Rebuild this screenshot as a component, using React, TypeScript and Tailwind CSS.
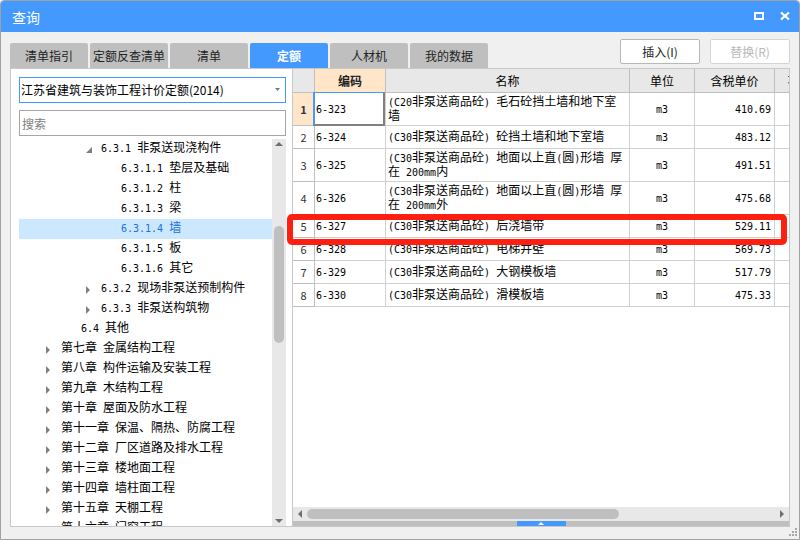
import { useState } from 'react'

interface TreeNode {
  text: string
  level: number
  state?: 'open' | 'closed'
}

interface QuotaRow {
  code: string
  name: string
  unit: string
  price: string
}

const TABS = ['清单指引', '定额反查清单', '清单', '定额', '人材机', '我的数据']

const TREE: TreeNode[] = [
  { text: '6.3.1 非泵送现浇构件', level: 2, state: 'open' },
  { text: '6.3.1.1 垫层及基础', level: 3 },
  { text: '6.3.1.2 柱', level: 3 },
  { text: '6.3.1.3 梁', level: 3 },
  { text: '6.3.1.4 墙', level: 3 },
  { text: '6.3.1.5 板', level: 3 },
  { text: '6.3.1.6 其它', level: 3 },
  { text: '6.3.2 现场非泵送预制构件', level: 2, state: 'closed' },
  { text: '6.3.3 非泵送构筑物', level: 2, state: 'closed' },
  { text: '6.4 其他', level: 1 },
  { text: '第七章 金属结构工程', level: 0, state: 'closed' },
  { text: '第八章 构件运输及安装工程', level: 0, state: 'closed' },
  { text: '第九章 木结构工程', level: 0, state: 'closed' },
  { text: '第十章 屋面及防水工程', level: 0, state: 'closed' },
  { text: '第十一章 保温、隔热、防腐工程', level: 0, state: 'closed' },
  { text: '第十二章 厂区道路及排水工程', level: 0, state: 'closed' },
  { text: '第十三章 楼地面工程', level: 0, state: 'closed' },
  { text: '第十四章 墙柱面工程', level: 0, state: 'closed' },
  { text: '第十五章 天棚工程', level: 0, state: 'closed' },
  { text: '第十六章 门窗工程', level: 0, state: 'closed' },
]

const INDENT = ['pl-[26px]', 'pl-[46px]', 'pl-[66px]', 'pl-[86px]']

const ROWS: QuotaRow[] = [
  { code: '6-323', name: '(C20非泵送商品砼) 毛石砼挡土墙和地下室墙', unit: 'm3', price: '410.69' },
  { code: '6-324', name: '(C30非泵送商品砼) 砼挡土墙和地下室墙', unit: 'm3', price: '483.12' },
  { code: '6-325', name: '(C30非泵送商品砼) 地面以上直(圆)形墙 厚在 200mm内', unit: 'm3', price: '491.51' },
  { code: '6-326', name: '(C30非泵送商品砼) 地面以上直(圆)形墙 厚在 200mm外', unit: 'm3', price: '475.68' },
  { code: '6-327', name: '(C30非泵送商品砼) 后浇墙带', unit: 'm3', price: '529.11' },
  { code: '6-328', name: '(C30非泵送商品砼) 电梯井壁', unit: 'm3', price: '569.73' },
  { code: '6-329', name: '(C30非泵送商品砼) 大钢模板墙', unit: 'm3', price: '517.79' },
  { code: '6-330', name: '(C30非泵送商品砼) 滑模板墙', unit: 'm3', price: '475.33' },
]

// Latin runs are set half as wide as a Chinese character
function Mixed({ text }: { text: string }) {
  return (
    <>
      {text.split(/([\x20-\x7e]+)/).map((part, i) =>
        i % 2 === 1 ? (
          <span key={i} className="font-['DejaVu_Sans_Mono',monospace] text-[10px] leading-none">
            {part}
          </span>
        ) : (
          part
        ),
      )}
    </>
  )
}

function TitleBar() {
  return (
    <header className="flex h-[31px] shrink-0 items-center bg-[#4499ff] pr-[9px] pl-[11px] text-white">
      <h1 className="flex-1 text-sm">查询</h1>
      <button type="button" aria-label="最大化" className="mr-[15px]">
        <svg width="11" height="9" viewBox="0 0 11 9" className="block" shapeRendering="crispEdges">
          <path d="M0 0H10V8H0ZM2 2V6H8V2Z" fill="currentColor" fillRule="evenodd" />
        </svg>
      </button>
      <button type="button" aria-label="关闭">
        <svg width="10" height="9" viewBox="0 0 10 9" className="block">
          <path d="M1 0.5L9 7.5M9 0.5L1 7.5" stroke="currentColor" strokeWidth="2.2" />
        </svg>
      </button>
    </header>
  )
}

function CategoryPane() {
  const [current, setCurrent] = useState('6.3.1.4 墙')

  return (
    <aside className="flex w-[282px] shrink-0 flex-col border-r border-[#c8c8c8] bg-white pt-2 pr-[6px] pl-2">
      <div className="relative shrink-0">
        <select
          aria-label="定额库"
          className="block h-[26px] w-full appearance-none border border-[#4499ff] bg-white pl-px text-xs text-black outline-none"
        >
          <option>江苏省建筑与装饰工程计价定额(2014)</option>
        </select>
        <svg width="5" height="3" viewBox="0 0 5 3" className="pointer-events-none absolute top-[11px] right-[6px]">
          <path d="M0 0H5L2.5 3Z" fill="#777" />
        </svg>
      </div>
      <input
        type="text"
        aria-label="搜索"
        placeholder="搜索"
        className="mt-[7px] block h-[26px] w-full shrink-0 border border-[#a6a6a6] bg-white pl-[2px] text-xs outline-none placeholder:text-[#808080]"
      />

      <div className="mt-[3px] flex min-h-0 flex-1">
        <ul role="tree" className="min-w-0 flex-1 overflow-hidden">
          {TREE.map((node) => (
            <li
              key={node.text}
              role="treeitem"
              aria-selected={node.text === current}
              onClick={() => setCurrent(node.text)}
              className={`flex h-5 cursor-default whitespace-nowrap ${INDENT[node.level]} ${
                node.text === current ? 'bg-[#cce8ff] text-[#1a6fe0]' : 'text-black'
              }`}
            >
              <span className="w-4 shrink-0 pt-[7px] pl-px">
                {node.state === 'open' && (
                  <svg width="6" height="7" viewBox="0 0 6 7" className="block">
                    <path d="M6 1V7H0Z" fill="#808080" />
                  </svg>
                )}
                {node.state === 'closed' && (
                  <svg width="4" height="8" viewBox="0 0 4 8" className="block">
                    <path d="M0 0L4 4L0 8Z" fill="#808080" />
                  </svg>
                )}
              </span>
              <span className="leading-4">
                <Mixed text={node.text} />
              </span>
            </li>
          ))}
        </ul>
        <div className="flex w-[14px] shrink-0 flex-col items-center bg-[#e8e8e8] py-[3px]">
          <svg width="8" height="4" viewBox="0 0 8 4" className="block shrink-0">
            <path d="M4 0L8 4H0Z" fill="#6e6e78" />
          </svg>
          <div className="flex w-full flex-1 flex-col items-center">
            <div className="flex-80" />
            <div className="w-[10px] flex-117 rounded-full bg-[#bfbfbf]" />
            <div className="flex-176" />
          </div>
          <svg width="8" height="4" viewBox="0 0 8 4" className="block shrink-0">
            <path d="M0 0H8L4 4Z" fill="#6e6e78" />
          </svg>
        </div>
      </div>
    </aside>
  )
}

const TH = 'h-6 border-r border-b border-[#bfbfbf] p-0 font-normal'
const TD = 'border-r border-b border-[#d0d0d0] pt-0 pb-[3px]'

function QuotaTable() {
  return (
    <table className="w-[calc(100%+72px)] table-fixed border-separate border-spacing-0 leading-[14px] text-black">
      <colgroup>
        <col className="w-[22px]" />
        <col className="w-[71px]" />
        <col />
        <col className="w-[65px]" />
        <col className="w-[80px]" />
        <col className="w-[86px]" />
      </colgroup>
      <thead>
        <tr className="bg-[#e8e8e8]">
          <th className={TH} />
          <th className="h-6 border-r border-b border-[#bfbfbf] bg-[#ffe6c8] p-0 font-bold text-[#222]">编码</th>
          <th className={TH}>名称</th>
          <th className={TH}>单位</th>
          <th className={TH}>含税单价</th>
          <th className={TH}>不含税单价</th>
        </tr>
      </thead>
      <tbody>
        {ROWS.map((row, i) => (
          <tr key={row.code} className={row.name.length > 22 || i === 0 ? 'h-[33px]' : 'h-[23px]'}>
            <th
              scope="row"
              className={`border-r border-b border-[#bfbfbf] p-0 text-[11px] text-[#333] ${
                i === 0 ? 'bg-[#ffe6c8] font-bold' : 'font-normal'
              }`}
            >
              {i + 1}
            </th>
            <td className={`${TD} relative pl-px`}>
              <Mixed text={row.code} />
              {i === 0 && (
                <span className="absolute -top-px right-0 -bottom-px -left-0.5 border-t border-r-2 border-b-2 border-l-2 border-t-[#4499ff] border-r-[#808080] border-b-[#808080] border-l-[#4499ff]" />
              )}
            </td>
            <td className={`${TD} pr-1 pl-[2px]`}>
              <Mixed text={row.name} />
            </td>
            <td className={`${TD} text-center`}>
              <Mixed text={row.unit} />
            </td>
            <td className={`${TD} pr-[3px] text-right`}>
              <Mixed text={row.price} />
            </td>
            <td className={TD} />
          </tr>
        ))}
      </tbody>
    </table>
  )
}

function QuotaPane() {
  return (
    <main className="relative flex min-w-0 flex-1 flex-col bg-white">
      <div className="min-h-0 flex-1 overflow-hidden">
        <QuotaTable />
      </div>

      <div className="flex h-[14px] shrink-0 items-center bg-[#e8e8e8] px-[5px]">
        <svg width="4" height="8" viewBox="0 0 4 8" className="block shrink-0">
          <path d="M4 0V8L0 4Z" fill="#6e6e78" />
        </svg>
        <div className="flex-1 px-[5px]">
          <div className="h-[10px] w-2/3 rounded-full bg-[#bfbfbf]" />
        </div>
        <svg width="4" height="8" viewBox="0 0 4 8" className="block shrink-0">
          <path d="M0 0V8L4 4Z" fill="#6e6e78" />
        </svg>
      </div>
      <div className="flex h-[5px] shrink-0 justify-center bg-[#bfbfbf]">
        <button type="button" aria-label="展开" className="flex w-[49px] items-center justify-center bg-[#4499ff]">
          <svg width="6" height="3" viewBox="0 0 6 3" className="block">
            <path d="M3 0L6 3H0Z" fill="#fff" />
          </svg>
        </button>
      </div>

      {/* marker round row 5 */}
      <div className="pointer-events-none absolute top-[145px] right-[2px] -left-[6px] h-[31px] rounded-[5px] border-[6px] border-[#ff1f10]" />
    </main>
  )
}

export default function App() {
  const [tab, setTab] = useState('定额')

  return (
    <div className="relative flex h-screen flex-col overflow-hidden rounded-t border border-[#a0a0a0] bg-[#f0f0f0] font-['Noto_Sans_CJK_SC',sans-serif] text-xs">
      <TitleBar />

      <div className="flex h-9 shrink-0 items-end px-[9px]">
        <nav role="tablist" className="flex flex-1 gap-[2px]">
          {TABS.map((t) => (
            <button
              key={t}
              type="button"
              role="tab"
              aria-selected={t === tab}
              onClick={() => setTab(t)}
              className={`h-[25px] w-[78px] rounded-t-[2px] whitespace-nowrap ${
                t === tab ? 'bg-[#4499ff] font-bold text-white' : 'bg-[#bfbfbf] text-[#222]'
              }`}
            >
              {t}
            </button>
          ))}
        </nav>
        <div className="mb-1 flex gap-[10px]">
          <button type="button" className="h-[25px] w-20 rounded-[2px] border border-[#b8b8b8] bg-white text-[#222]">
            插入(I)
          </button>
          <button
            type="button"
            disabled
            className="h-[25px] w-20 rounded-[2px] border border-[#d4d4d4] bg-white text-[#b8b8b8]"
          >
            替换(R)
          </button>
        </div>
      </div>

      <div className="mx-[9px] mb-3 flex min-h-0 flex-1 border border-[#c8c8c8]">
        <CategoryPane />
        <QuotaPane />
      </div>

      <svg width="8" height="8" viewBox="0 0 8 8" className="absolute right-[2px] bottom-[3px]" shapeRendering="crispEdges">
        <path d="M6 0h2v2h-2zM3 3h2v2h-2zM6 3h2v2h-2zM0 6h2v2h-2zM3 6h2v2h-2zM6 6h2v2h-2z" fill="#a8a8a8" />
      </svg>
    </div>
  )
}
